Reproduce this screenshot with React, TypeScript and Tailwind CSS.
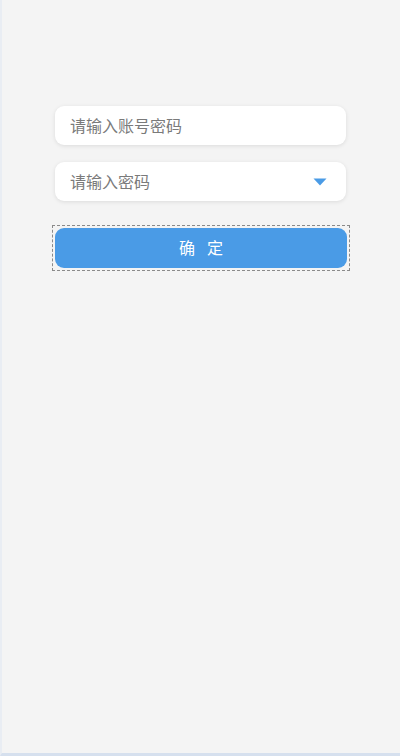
import React from "react";

export default function App() {
  return (
    <div
      className="relative w-[400px] h-[756px] bg-[#f4f4f4] overflow-hidden border-l-[2px] border-l-[#e9edf3] border-b-[3px] border-b-[#d6e0ee]"
      style={{ fontFamily: '"Noto Sans", "Noto Sans CJK SC", sans-serif' }}
    >
      <div className="flex flex-col pt-[106px] pl-[53px]">
        <div className="w-[291px] h-[39px] bg-white rounded-[9px] shadow-[0_1px_4px_rgba(0,0,0,0.10)] flex items-center pl-[15px]">
          <span className="text-[16px] text-[#7a7a7a] leading-none">请输入账号密码</span>
        </div>
        <div className="mt-[17px] w-[291px] h-[39px] bg-white rounded-[9px] shadow-[0_1px_4px_rgba(0,0,0,0.10)] flex items-center pl-[15px] pr-[19px] justify-between">
          <span className="text-[16px] text-[#7a7a7a] leading-none">请输入密码</span>
          <svg width="14" height="8" viewBox="0 0 14 8">
            <path d="M0.5 0.5 L13.5 0.5 L7 7.5 Z" fill="#4a9be6" />
          </svg>
        </div>
        <div className="mt-[24px] -ml-[3px] w-[298px] h-[46px] border border-dashed border-[#8a8a8a] p-[2px]">
          <div className="w-full h-full bg-[#4a9be6] rounded-[9px] flex items-center justify-center">
            <span className="text-[16px] text-white tracking-[12px] pl-[12px] leading-none">确定</span>
          </div>
        </div>
      </div>
    </div>
  );
}
